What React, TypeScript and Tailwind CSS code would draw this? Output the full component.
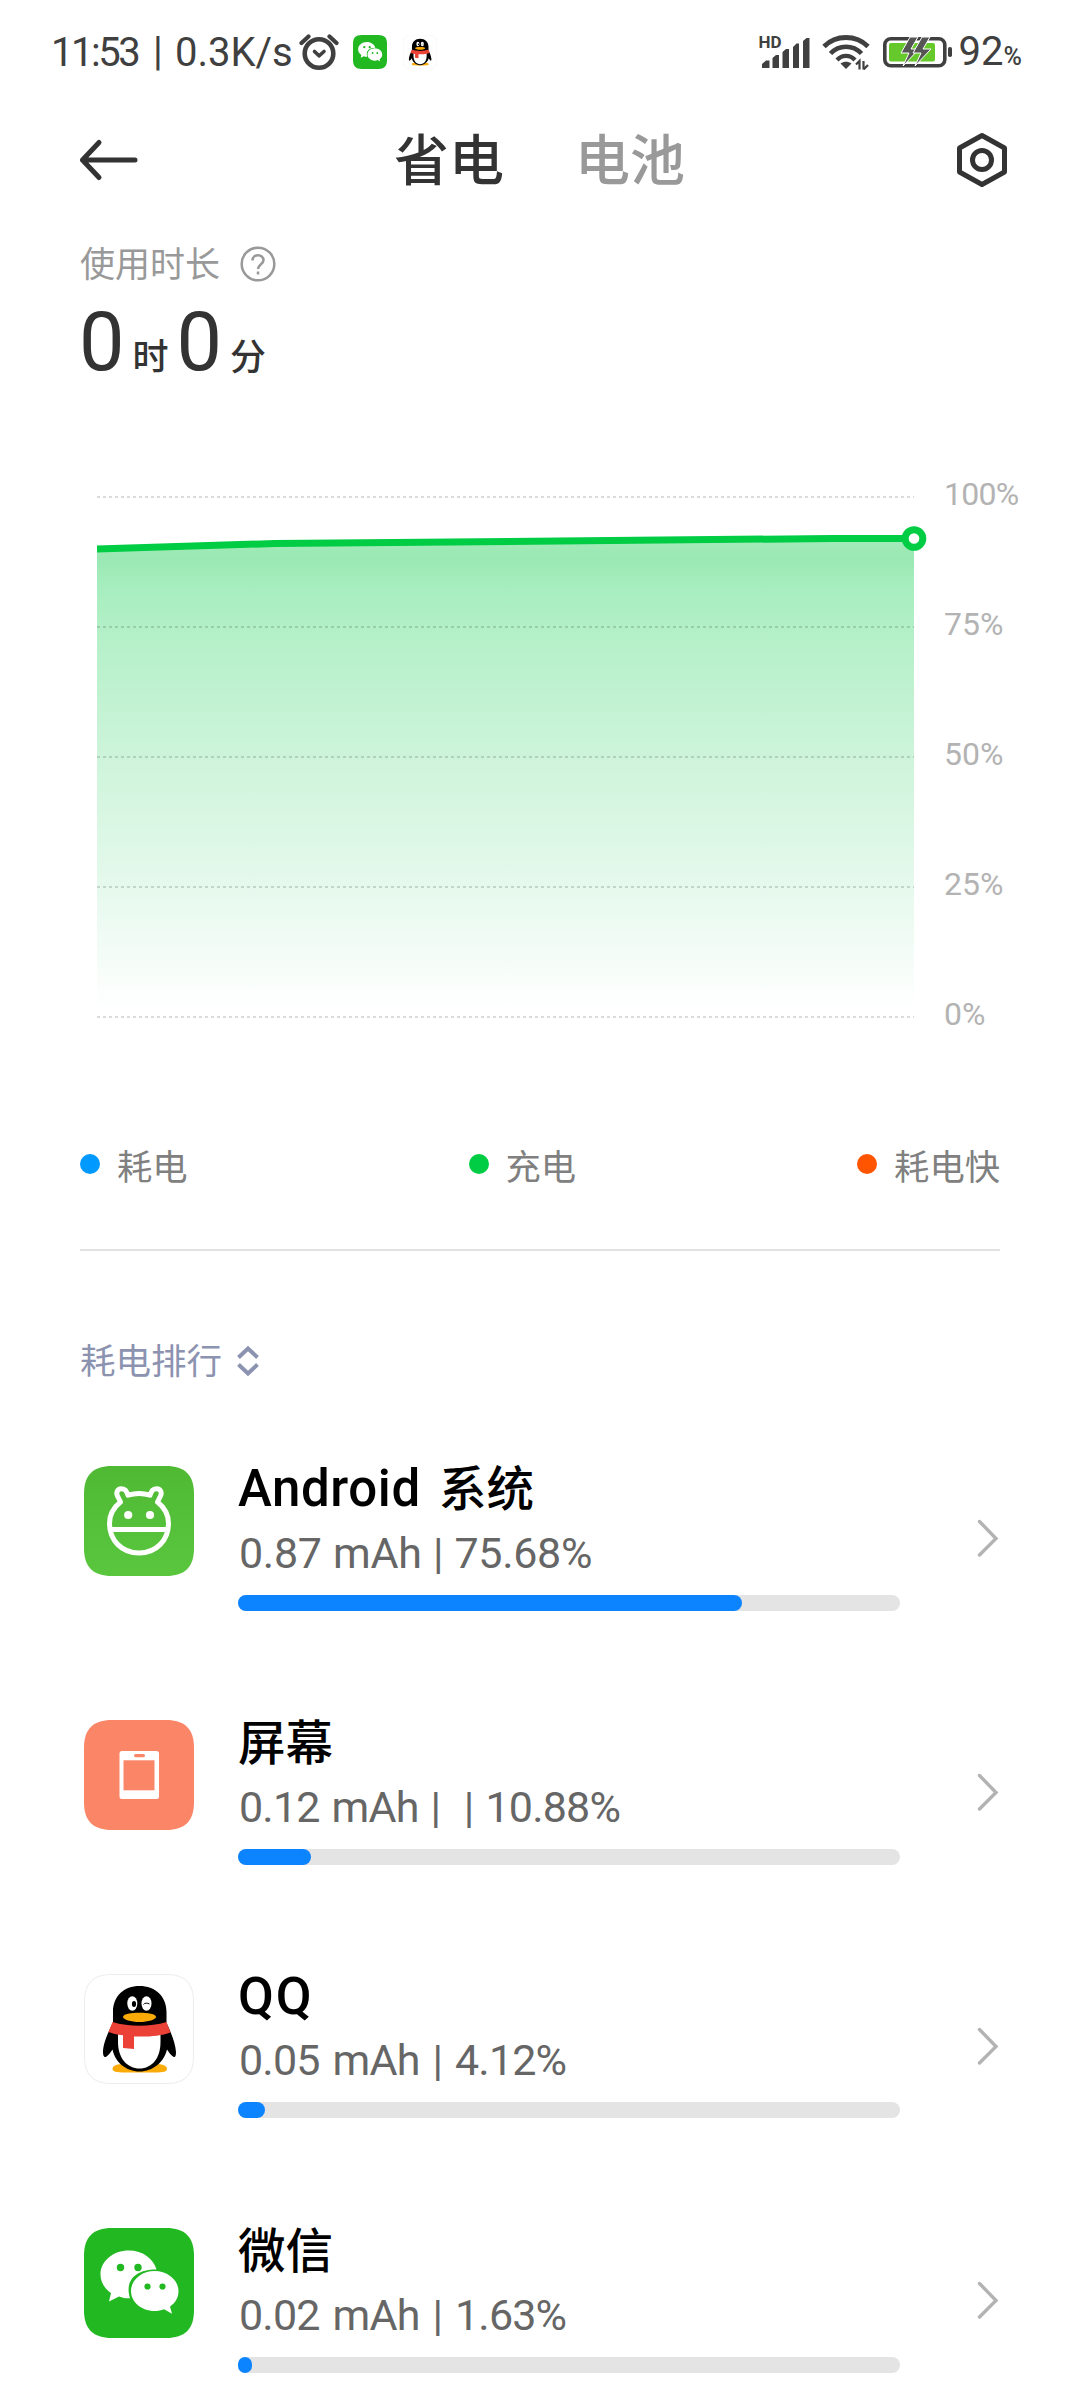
import type { ReactNode } from 'react';

const WeChatIcon = ({ className }: { className?: string }) => (
  <svg viewBox="0 0 110 110" className={className}>
    <path d="M28 0H82C101 0 110 9 110 28V82C110 101 101 110 82 110H28C9 110 0 101 0 82V28C0 9 9 0 28 0Z" fill="#22b822" />
    <path d="M45 22.5C29 22.5 16.5 33 16.5 46.5C16.5 54 20.5 60.5 27 65L25 73.5L35 68.5C39 70 42 70.5 46 70.3C40 51 54 41 72.5 41.5C69.5 30.5 58.5 22.5 45 22.5Z" fill="#fff" />
    <path d="M70.5 43C57.5 43 47 52 47 63C47 74 57.5 83 70.5 83C74 83 77 82.3 80 81.2L88 85.8L86 78.5C91.5 74.8 94.5 69.5 94.5 63C94.5 52 83.5 43 70.5 43Z" fill="#fff" />
    <circle cx="36.5" cy="39.5" r="3.7" fill="#22b822" />
    <circle cx="54" cy="39.5" r="3.7" fill="#22b822" />
    <circle cx="63.5" cy="58.5" r="3.1" fill="#22b822" />
    <circle cx="78.5" cy="58.5" r="3.1" fill="#22b822" />
  </svg>
);

const QQIcon = ({ className }: { className?: string }) => (
  <svg viewBox="0 0 110 110" className={className}>
    <path d="M28 0.5H82C101 0.5 109.5 9 109.5 28V82C109.5 101 101 109.5 82 109.5H28C9 109.5 0.5 101 0.5 82V28C0.5 9 9 0.5 28 0.5Z" fill="#fff" stroke="#ececec" />
    <path d="M28.5 95C28.5 91 34 90 40 90H71C77 90 83 91 83 95C83 98.5 76 98.5 68 98.5H44C36 98.5 28.5 98.5 28.5 95Z" fill="#faab07" />
    <path d="M55.5 12C40 12 29 22 29 38V49C24 58 19 70 19 78C19 82.5 20.5 84 22.5 82.5C25 80.5 27 78 28.5 75.5C31 88 42 97.5 55.5 97.5C69 97.5 80 88 83 75.5C84.5 78 86.5 80.5 89 82.5C91 84 92 82.5 92 78C91.5 70 87 58 82.5 49V38C82.5 22 71 12 55.5 12Z" fill="#000" />
    <path d="M34 58H76.5V68C76.5 84 68 94.5 55.5 94.5C43 94.5 34 84 34 68Z" fill="#fff" />
    <path d="M28.5 48C45 53 66 53 82.5 48L86.5 58.5C77 62 64 63 50 62.5V75L39 74V61.3C33 60.5 28 59.5 24.5 58Z" fill="#eb4136" />
    <ellipse cx="48.3" cy="29.5" rx="5" ry="7.3" fill="#fff" />
    <ellipse cx="62.5" cy="29.5" rx="5" ry="7.3" fill="#fff" />
    <ellipse cx="50" cy="30" rx="2.1" ry="2.9" fill="#000" />
    <path d="M59.5 30.5C60.5 28.8 63.5 28.8 65.5 30" fill="none" stroke="#000" strokeWidth="1" />
    <path d="M39 43C39 40 47 38.8 55.5 38.8C64 38.8 72 40 72 43C72 45.5 64 48 55.5 48C47 48 39 45.5 39 43Z" fill="#faab07" />
  </svg>
);

const AndroidIcon = ({ className }: { className?: string }) => (
  <svg viewBox="0 0 110 110" className={className}>
    <defs>
      <linearGradient id="android-bg" x1="0" y1="0" x2="0" y2="1">
        <stop offset="0" stopColor="#4fb934" />
        <stop offset="1" stopColor="#5ac63e" />
      </linearGradient>
    </defs>
    <path d="M28 0H82C101 0 110 9 110 28V82C110 101 101 110 82 110H28C9 110 0 101 0 82V28C0 9 9 0 28 0Z" fill="url(#android-bg)" />
    <g fill="none" stroke="#fff" strokeWidth="5" strokeLinejoin="round">
      <path d="M44 29.2C51 27 59 27 66 29.2C67.5 25.5 68.5 22.7 72.5 22.7C77 22.7 78 27 76.5 30L73.5 36C80.5 41.5 84.5 49 84.5 57.5C84.5 74.5 72 87 55 87C38 87 25.5 74.5 25.5 57.5C25.5 49 29.5 41.5 36.5 36L33.5 30C32 27 33 22.7 37.5 22.7C41.5 22.7 42.5 25.5 44 29.2Z" />
      <path d="M26 63.5H84" />
    </g>
    <circle cx="44.2" cy="49" r="4.1" fill="#fff" />
    <circle cx="66" cy="49" r="4.1" fill="#fff" />
  </svg>
);

const ScreenIcon = ({ className }: { className?: string }) => (
  <svg viewBox="0 0 110 110" className={className}>
    <path d="M28 0H82C101 0 110 9 110 28V82C110 101 101 110 82 110H28C9 110 0 101 0 82V28C0 9 9 0 28 0Z" fill="#fa8567" />
    <rect x="35.5" y="31" width="39.5" height="48" rx="2.5" fill="#fff" />
    <rect x="39.5" y="40.3" width="31" height="30" fill="#fa8567" />
    <rect x="50" y="34" width="11" height="3.2" rx="1.6" fill="#fa8567" />
  </svg>
);

const AlarmIcon = () => (
  <svg viewBox="0 0 40 38" className="w-10 h-[38px]" fill="none" stroke="#404040" strokeLinecap="round">
    <circle cx="20" cy="20.5" r="14.3" strokeWidth="4.6" />
    <path d="M2.5 10L9.5 3.5M37.5 10L30.5 3.5" strokeWidth="4.2" />
    <path d="M15.5 18.5L20 22.8L25 18.5" strokeWidth="3.6" strokeLinejoin="round" />
  </svg>
);

const SignalIcon = () => (
  <svg viewBox="0 0 50 34" className="w-[50px] h-[34px]" fill="#404040">
    <path d="M2 33V29L6 25.5H9.5V33ZM12.5 33V23L16 20H19V33ZM22.5 33V17L26 14H29V33ZM33 33V12L36.5 8.5H39V33ZM43 33V6L46.5 3H49.5V33Z" />
  </svg>
);

const WifiIcon = () => (
  <svg viewBox="0 0 48 36" className="w-12 h-9" fill="none" stroke="#404040">
    <path d="M2 12.5C14 0.5 34 0.5 46 12.5" strokeWidth="4.8" />
    <path d="M8.5 19.5C17 10.5 31 10.5 39.5 19.5" strokeWidth="4.6" />
    <path d="M15 26C20 20.5 28 20.5 33 26" strokeWidth="4.2" />
    <path d="M18.5 29.5C22 27 26 27 29.5 29.5L24 35Z" fill="#404040" stroke="none" />
    <path d="M34 30.5L37.5 27V35.5M41.5 35.5V27M41.5 35.5L46 31M41.5 27V35.5" strokeWidth="2.2" />
  </svg>
);

const BatteryIcon = () => (
  <svg viewBox="0 0 70 32" className="w-[70px] h-8">
    <rect x="1.8" y="2.8" width="60" height="27" rx="6" fill="none" stroke="#404040" strokeWidth="3.6" />
    <rect x="6" y="7" width="46" height="18.5" rx="2" fill="#66c92b" />
    <rect x="65" y="11" width="4" height="10" rx="1.8" fill="#404040" />
    <g fill="#555" stroke="#fff" strokeWidth="1">
      <path d="M27 1L18 17H26L20 30L36 13H28L35 1Z" />
      <path d="M39 1L30 17H38L32 30L48 13H40L47 1Z" />
    </g>
  </svg>
);

const levels = ['100%', '75%', '50%', '25%', '0%'];
const gridLines = [27, 157, 287, 417, 547];

const BatteryChart = () => (
  <div className="flex ml-[97px]">
    <svg viewBox="0 0 831 560" className="w-[831px] h-[560px] shrink-0">
      <defs>
        <linearGradient id="fill" gradientUnits="userSpaceOnUse" x1="0" y1="70" x2="0" y2="540">
          <stop offset="0" stopColor="#a2ebba" />
          <stop offset="0.04" stopColor="#9ae8b3" />
          <stop offset="0.095" stopColor="#a6edbe" />
          <stop offset="0.2" stopColor="#b4f0c8" />
          <stop offset="0.46" stopColor="#cdf4da" />
          <stop offset="0.74" stopColor="#e6f9ed" />
          <stop offset="1" stopColor="#ffffff" />
        </linearGradient>
      </defs>
      <path d="M0 79L178 73L736 68.5H817V547H0Z" fill="url(#fill)" />
      {gridLines.map((y) => (
        <path key={y} d={`M0 ${y}H817`} stroke="#000" strokeOpacity="0.14" strokeWidth="2" strokeDasharray="3 3" />
      ))}
      <path d="M0 79L178 73.5L736 68.5H817" fill="none" stroke="#00cc44" strokeWidth="7" />
      <circle cx="817" cy="68.5" r="8.8" fill="#fff" stroke="#00cc44" strokeWidth="7" />
    </svg>
    <div className="flex flex-col gap-[90px] pt-[4px] ml-[16px] text-[32px] leading-[40px] text-[#b3b3b3]">
      {levels.map((level) => (
        <span key={level} className={level === '100%' ? 'tracking-[-0.7px]' : ''}>{level}</span>
      ))}
    </div>
  </div>
);

const Legend = ({ color, label }: { color: string; label: string }) => (
  <div className="flex items-center gap-[17px]">
    <span className={`w-5 h-5 rounded-full ${color}`}></span>
    <span className="pt-[4px] -mb-[4px] text-[35.3px] leading-[48px] text-[#808080]">{label}</span>
  </div>
);

interface AppUsage {
  id: string;
  icon: ReactNode;
  name: ReactNode;
  usage: string;
  width: number;
  spacing?: string;
}

const apps: AppUsage[] = [
  {
    id: 'android',
    icon: <AndroidIcon className="w-[110px] h-[110px]" />,
    name: <><span className="tracking-[0.6px]">Android </span><span className="text-[47.5px] ml-[5px]">系统</span></>,
    usage: '0.87 mAh | 75.68%',
    width: 504,
    spacing: 'tracking-[-0.3px] [word-spacing:1px]',
  },
  {
    id: 'screen',
    icon: <ScreenIcon className="w-[110px] h-[110px]" />,
    name: <span className="text-[47.5px]">屏幕</span>,
    usage: '0.12 mAh |  | 10.88%',
    width: 73,
    spacing: 'tracking-[-0.8px] [word-spacing:2px]',
  },
  {
    id: 'qq',
    icon: <QQIcon className="w-[110px] h-[110px]" />,
    name: <span className="text-[52px] tracking-[2px]">QQ</span>,
    usage: '0.05 mAh | 4.12%',
    width: 27,
    spacing: 'tracking-[-0.8px] [word-spacing:3px]',
  },
  {
    id: 'wechat',
    icon: <WeChatIcon className="w-[110px] h-[110px]" />,
    name: <span className="text-[47.5px]">微信</span>,
    usage: '0.02 mAh | 1.63%',
    width: 14,
    spacing: 'tracking-[-0.8px] [word-spacing:3px]',
  },
];

const AppRow = ({ app }: { app: AppUsage }) => (
  <div className="flex h-[254px] pl-[84px] pr-20">
    <div className="pt-[7px] shrink-0">{app.icon}</div>
    <div className="w-[662px] ml-11 shrink-0">
      <div className="text-[51px] leading-[60px] font-medium text-black whitespace-pre">{app.name}</div>
      <div className={`mt-[7px] pl-px text-[43px] leading-[52px] text-[#666] whitespace-pre ${app.spacing ?? ''}`}>{app.usage}</div>
      <div className="mt-4 h-4 rounded-full bg-[#e4e4e4]">
        <div className="h-4 rounded-full bg-[#0d84ff]" style={{ width: app.width }}></div>
      </div>
    </div>
    <svg viewBox="0 0 24 40" className="w-6 h-10 ml-auto mt-[59px]" fill="none" stroke="#b3b3b3" strokeWidth="3.4" strokeLinecap="round">
      <path d="M3.5 3.5L20 20.5L3.5 37" />
    </svg>
  </div>
);

function App() {
  return (
    <div className="w-[1080px] h-[2400px] overflow-hidden bg-white font-[Roboto,'Noto_Sans_CJK_SC',sans-serif]">
      {/* Status bar */}
      <div className="flex items-center h-[104px] pl-[51px] pr-[58px] text-[#404040] text-[40px] leading-[48px]">
        <span className="w-[90px] pt-[2px] tracking-[-2.5px]">11:53</span>
        <span className="w-[34px] text-center">|</span>
        <span className="w-[124px] pt-[2px]">0.3K/s</span>
        <AlarmIcon />
        <WeChatIcon className="w-[34px] h-[34px] ml-[14px]" />
        <QQIcon className="w-[34px] h-[34px] ml-4" />
        <div className="flex items-center ml-auto">
          <div className="relative">
            <SignalIcon />
            <span className="absolute -left-px -top-[2px] text-[17px] leading-[18px] font-bold">HD</span>
          </div>
          <div className="ml-[12px]"><WifiIcon /></div>
          <div className="ml-[13px]"><BatteryIcon /></div>
          <div className="flex items-baseline ml-[6px] pt-[5px]">
            <span>92</span>
            <span className="text-[25px] font-medium">%</span>
          </div>
        </div>
      </div>

      {/* Header */}
      <div className="flex items-center h-[112px] pl-[78px] pr-[71px]">
        <svg viewBox="0 0 60 44" className="w-[60px] h-11" fill="none" stroke="#333" strokeWidth="5" strokeLinecap="round" strokeLinejoin="round">
          <path d="M57 22H4.5M21 4.5L4.5 22L21 39.5" />
        </svg>
        <div className="flex gap-[71px] ml-[256px] pt-[2px] text-[55px] leading-[80px] font-medium">
          <span className="text-[#333]">省电</span>
          <span className="text-[#999]">电池</span>
        </div>
        <svg viewBox="0 0 54 58" className="w-[54px] h-[58px] ml-auto" fill="none" stroke="#333" strokeWidth="5" strokeLinejoin="round">
          <path d="M27 4.5L49.5 17V41L27 53.5L4.5 41V17Z" />
          <circle cx="27" cy="29" r="9.5" />
        </svg>
      </div>

      {/* Usage time */}
      <div className="flex items-center h-12 pl-20 mt-6 text-[35px] leading-[48px] text-[#999]">
        <span className="pt-[3px]">使用时长</span>
        <svg viewBox="0 0 36 36" className="w-9 h-9 ml-5" fill="none" stroke="#999" strokeWidth="2.5">
          <circle cx="18" cy="18" r="16.3" />
          <path d="M12.5 14.5C12.5 7.5 23.5 7.5 23.5 14.3C23.5 18 18 18.5 18 23M18 25.5V28.5" />
        </svg>
      </div>
      <div className="flex items-baseline h-[88px] mt-[11px] pl-[79px] leading-[88px] text-[#333]">
        <span className="text-[81px]">0</span>
        <span className="text-[36px] font-medium ml-2">时</span>
        <span className="text-[81px] ml-2">0</span>
        <span className="text-[36px] font-medium ml-2">分</span>
      </div>

      <div className="mt-[83px]">
        <BatteryChart />
      </div>

      <div className="flex justify-between px-20 mt-[106px]">
        <Legend color="bg-[#0099ff]" label="耗电" />
        <Legend color="bg-[#00cc44]" label="充电" />
        <Legend color="bg-[#ff5500]" label="耗电快" />
      </div>
      <div className="h-[2px] mx-20 mt-[61px] bg-[#e2e2e2]"></div>

      {/* Ranking */}
      <div className="flex items-center h-12 pl-20 mt-[86px] text-[35.5px] leading-[48px] text-[#8c93b0]">
        <span className="pt-[2px]">耗电排行</span>
        <svg viewBox="0 0 24 34" className="w-6 h-[34px] ml-[14px]" fill="none" stroke="#8c93b0" strokeWidth="4">
          <path d="M2.5 13.5L12 4.5L21.5 13.5M2.5 20.5L12 29.5L21.5 20.5" />
        </svg>
      </div>
      <div className="mt-[74px]">
        {apps.map((app) => (
          <AppRow key={app.id} app={app} />
        ))}
      </div>
    </div>
  );
}

export default App;
